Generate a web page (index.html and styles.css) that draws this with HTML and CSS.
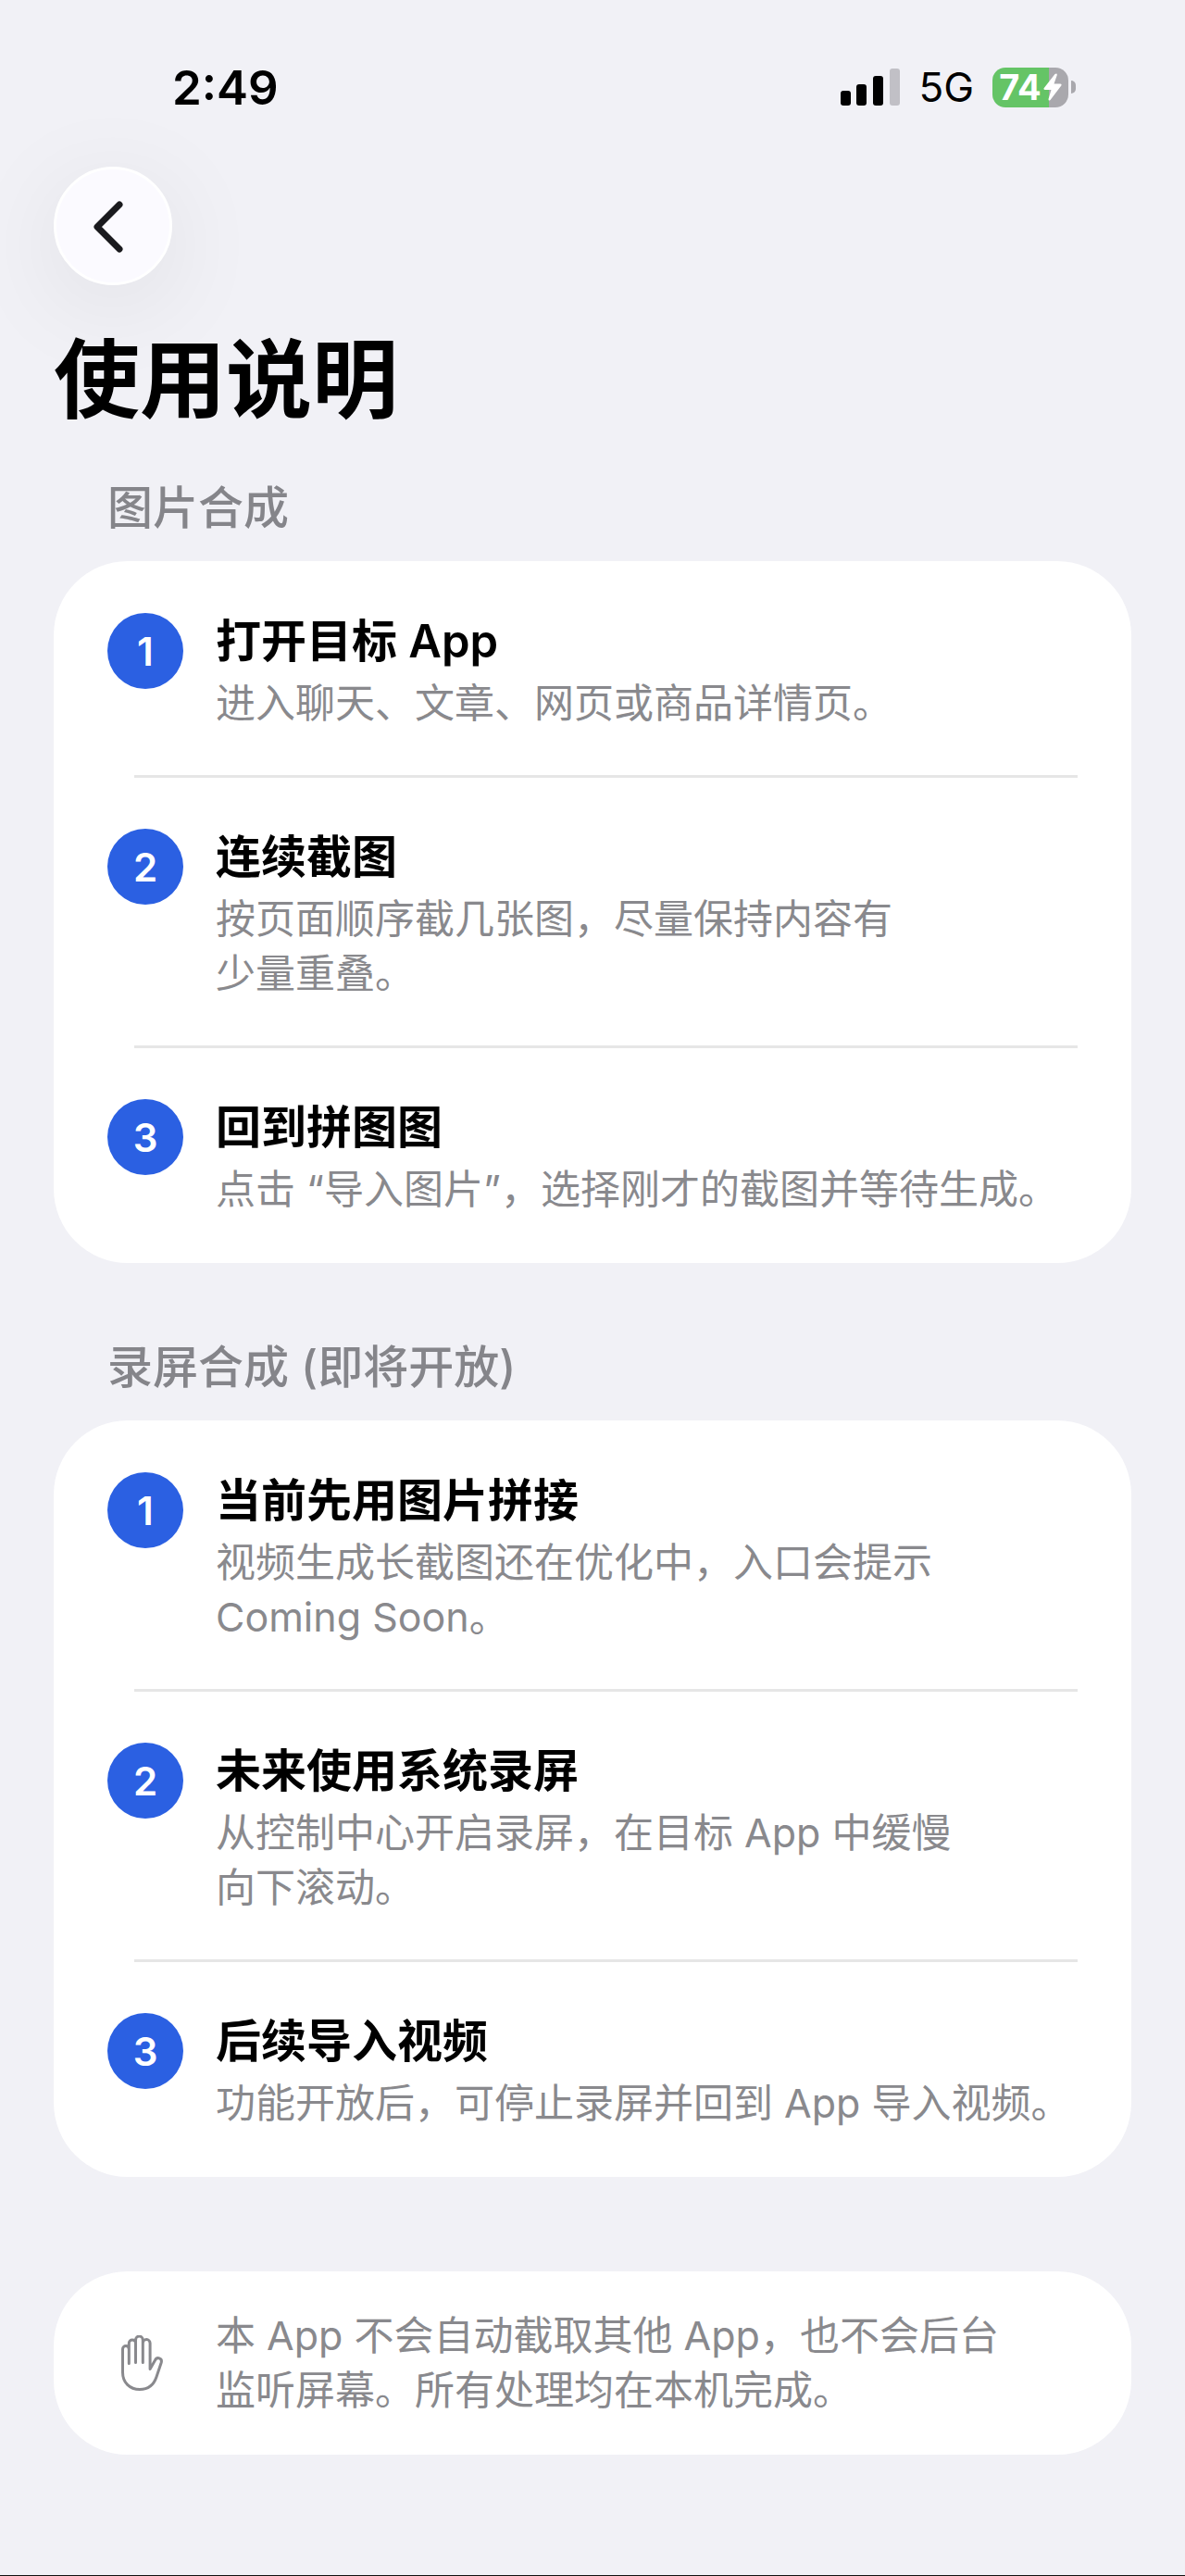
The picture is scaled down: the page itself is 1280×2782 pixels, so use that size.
FILE: index.html
```html
<!DOCTYPE html>
<html lang="zh-CN">

<head>
    <meta charset="UTF-8">
    <meta name="viewport" content="width=device-width, initial-scale=1.0">
    <title>使用说明</title>
    <link rel="stylesheet" href="styles.css">
</head>

<body>
    <div class="status-bar">
        <span class="time">2:49</span>
        <div class="status-icons">
            <svg class="signal" viewBox="0 0 64 40" aria-hidden="true">
                <rect x="0" y="24" width="11" height="16" rx="3" />
                <rect x="17" y="17" width="11" height="23" rx="3" />
                <rect x="35" y="8" width="11" height="32" rx="3" />
                <rect x="53" y="0" width="11" height="40" rx="3" fill="#c1c0c6" />
            </svg>
            <span class="network">5G</span>
            <div class="battery">
                <div class="battery-body">
                    <span>74</span>
                    <svg class="bolt" viewBox="0 0 20 30" aria-hidden="true">
                        <path d="M12.500 1 L0.800 16 Q-0.300 18 2 18 H8.500 L5.500 28 Q5.500 30.500 7.500 29 L19.300 13.500 Q20.300 11.500 18 11.500 H11.500 L14.800 2 Q15 -0.500 12.500 1 Z" fill="#fff" />
                    </svg>
                </div>
                <div class="battery-tip"></div>
            </div>
        </div>
    </div>

    <main class="container">
        <button type="button" class="back-button" aria-label="返回">
            <svg viewBox="0 0 32 56" aria-hidden="true">
                <path d="M28 4 L4 28 L28 52" />
            </svg>
        </button>

        <h1>使用说明</h1>

        <section>
            <h2>图片合成</h2>
            <ol class="card">
                <li class="step">
                    <span class="badge">1</span>
                    <div>
                        <h3>打开目标 App</h3>
                        <p>进入聊天、文章、网页或商品详情页。</p>
                    </div>
                </li>
                <li class="step">
                    <span class="badge">2</span>
                    <div>
                        <h3>连续截图</h3>
                        <p>按页面顺序截几张图，尽量保持内容有<br>少量重叠。</p>
                    </div>
                </li>
                <li class="step">
                    <span class="badge">3</span>
                    <div>
                        <h3>回到拼图图</h3>
                        <p>点击 “导入图片”，选择刚才的截图并等待生成。</p>
                    </div>
                </li>
            </ol>
        </section>

        <section>
            <h2>录屏合成 (即将开放)</h2>
            <ol class="card">
                <li class="step">
                    <span class="badge">1</span>
                    <div>
                        <h3>当前先用图片拼接</h3>
                        <p>视频生成长截图还在优化中，入口会提示<br>Coming Soon。</p>
                    </div>
                </li>
                <li class="step">
                    <span class="badge">2</span>
                    <div>
                        <h3>未来使用系统录屏</h3>
                        <p>从控制中心开启录屏，在目标 App 中缓慢<br>向下滚动。</p>
                    </div>
                </li>
                <li class="step">
                    <span class="badge">3</span>
                    <div>
                        <h3>后续导入视频</h3>
                        <p>功能开放后，可停止录屏并回到 App 导入视频。</p>
                    </div>
                </li>
            </ol>
        </section>

        <div class="card note">
            <svg class="hand" viewBox="0 0 46 60" aria-hidden="true">
                <path d="M1.500 40 V15 a3.400 3.400 0 0 1 6.800 0 V8.500 a3.600 3.600 0 0 1 7.200 0 V5 a3.900 3.900 0 0 1 7.800 0 V8.500 a3.900 3.900 0 0 1 7.800 0 V36.500 L36.500 27 C38.500 23 44.500 24.500 43.200 29.500 L38 45 C35 54 29 58.500 20 58.500 C9 58.500 1.500 51 1.500 40 Z M8.300 15 V30.500 M15.500 8.500 V29.500 M23.300 8.500 V29.500" />
            </svg>
            <p>本 App 不会自动截取其他 App，也不会后台<br>监听屏幕。所有处理均在本机完成。</p>
        </div>
    </main>
</body>

</html>
```
FILE: styles.css
```css
* {
    box-sizing: border-box;
}

body {
    font-family: Inter, "Noto Sans CJK SC", sans-serif;
    background-color: #f1f1f6;
    color: #000;
    margin: 0;
    min-height: 100vh;
    border-bottom: 1px solid #111;
}

h1,
h2,
h3,
p,
ol {
    margin: 0;
    padding: 0;
}

.status-bar {
    display: flex;
    justify-content: space-between;
    align-items: center;
    height: 180px;
    padding: 8px 118px 0 186px;
}

.time {
    font-size: 51px;
    font-weight: 600;
}

.status-icons {
    display: flex;
    align-items: center;
    gap: 20px;
}

.signal {
    width: 64px;
    height: 40px;
}

.network {
    font-size: 44px;
}

.battery {
    display: flex;
    align-items: center;
    gap: 3px;
}

.battery-body {
    display: flex;
    align-items: center;
    justify-content: center;
    gap: 2px;
    width: 82px;
    height: 43px;
    border-radius: 14px;
    background: linear-gradient(to right, #65c466 74%, #a9a8ad 74%);
    color: #fff;
    font-size: 38px;
    font-weight: 700;
}

.bolt {
    width: 20px;
    height: 30px;
}

.battery-tip {
    width: 5px;
    height: 14px;
    border-radius: 0 6px 6px 0;
    background-color: #a9a8ad;
}

.container {
    padding: 0 58px;
}

.back-button {
    display: flex;
    align-items: center;
    justify-content: center;
    width: 128px;
    height: 128px;
    padding: 2px 10px 0 0;
    border: 3px solid #fff;
    border-radius: 50%;
    background-color: #fbfaff;
    box-shadow: 0 20px 110px rgba(0, 0, 0, 0.08);
    cursor: pointer;
}

.back-button svg {
    width: 32px;
    height: 56px;
    fill: none;
    stroke: #1a1a1e;
    stroke-width: 7;
    stroke-linecap: round;
    stroke-linejoin: round;
}

h1 {
    margin-top: 46px;
    font-size: 93px;
    line-height: 112px;
}

h2 {
    padding: 53px 58px 27px;
    font-size: 49px;
    font-weight: 500;
    line-height: 60px;
    color: #85858a;
}

section + section {
    margin-top: 30px;
}

.card {
    border-radius: 80px;
    background-color: #fff;
    list-style: none;
}

.step {
    display: flex;
    gap: 35px;
    position: relative;
    padding: 56px 40px 50px 58px;
}

/* Divider between two steps */
.step + .step::before {
    content: "";
    position: absolute;
    top: -2px;
    left: 87px;
    right: 58px;
    height: 3px;
    background-color: #e6e6e6;
}

.badge {
    display: flex;
    align-items: center;
    justify-content: center;
    flex-shrink: 0;
    width: 82px;
    height: 82px;
    border-radius: 50%;
    background-color: #2b60e2;
    color: #fff;
    font-size: 42px;
    font-weight: 600;
}

h3 {
    margin-bottom: 6px;
    font-size: 49px;
    font-weight: 600;
    line-height: 62px;
}

p {
    font-size: 43px;
    line-height: 59px;
    color: #89898d;
}

.note {
    display: flex;
    align-items: center;
    gap: 56px;
    margin-top: 102px;
    padding: 40px 58px 40px 73px;
}

.hand {
    flex-shrink: 0;
    width: 46px;
    height: 60px;
    fill: none;
    stroke: #89898d;
    stroke-width: 3;
    stroke-linecap: round;
    stroke-linejoin: round;
}
```
